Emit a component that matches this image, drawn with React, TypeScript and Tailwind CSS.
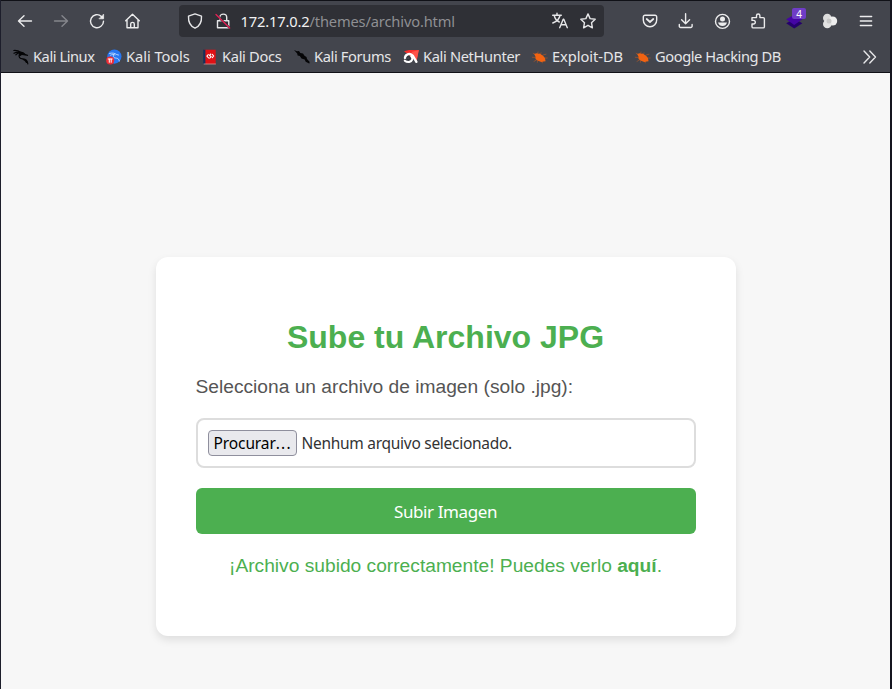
import type { ReactNode } from 'react';

const stroke = {
  fill: 'none',
  stroke: 'currentColor',
  strokeWidth: 1.4,
  strokeLinecap: 'round' as const,
  strokeLinejoin: 'round' as const,
};

function Glyph({ children }: { children: ReactNode }) {
  return (
    <svg width="16" height="16" viewBox="0 0 16 16" className="block shrink-0 overflow-visible" {...stroke}>
      {children}
    </svg>
  );
}

function ToolButton({ label, dim, children }: { label: string; dim?: boolean; children: ReactNode }) {
  return (
    <button aria-label={label} className={`flex h-8 w-9 shrink-0 items-center justify-center ${dim ? 'text-[#85868c]' : 'text-[#ececed]'}`}>
      {children}
    </button>
  );
}

const dragon = (
  <Glyph>
    <g stroke="#050507" strokeWidth="1.2">
      <path d="M.8 1.500c2.800-.2 4.900.3 6.800 1.700M1 4.300c2.300-1.300 4.500-1.300 6.800-.9M2.800 5.800C4 4.200 6 3.600 8 3.600M7.500 3.200c1.500.2 3.500 1 4.800 2.400l2.200.8M6.600 4.200C5 8.600 7 9.600 9.900 9.800c3.200.2 4.600 1.800 4.900 5M9.500 10c1.900.8 3.500 1.900 4 3.500" />
      <path d="M7.400 3.300 12.300 5.800 9 5.300 6.600 6.700z" fill="#050507" />
    </g>
  </Glyph>
);

const tools = (
  <Glyph>
    <circle cx="8.400" cy="7.600" r="7.100" fill="#2777f2" stroke="none" />
    <path d="M3.500 4.400c3-.7 5.200-.3 7.300 1.200l1.700.4M4.500 6.200c1.500-.8 3.200-.9 4.500-.3M7.600 5.500c-1 3 .8 3.400 2.900 3.700 1.900.3 2.600 1.300 2.800 2.800" stroke="#c1ddff" strokeWidth=".9" />
    <circle cx="4.200" cy="11.500" r="4" fill="#ee2d35" stroke="none" />
    <path d="M2.200 10h4M3.300 10.200v3.100M5.200 10.200v3.100" stroke="#fff" strokeWidth="1" />
  </Glyph>
);

const docs = (
  <Glyph>
    <path d="M2 .7h11.700v14.500H2z" fill="#df1015" stroke="none" />
    <path d="M1.200.7h2.200v14.500H1.200z" fill="#17305b" stroke="none" />
    <path d="M6.300 5.500 4.900 7.200l1.600 1.600M8.800 5 7.400 6.300l1.800 1.400-1.500 1.400M10.300 5.400 11.700 7l-1.400 1.600" stroke="#fff" strokeWidth="1.100" />
    <path d="M2 15h11.500" stroke="#c8b3af" strokeWidth=".7" />
  </Glyph>
);

const forums = (
  <Glyph>
    <path d="m0 1 3 1.300L5 2l1.300 2 2.700.5 1.500 2.300 2 1.200.5 2 3.200 3.500-1.200-.1.600 1.400-3.900-2-1-2.200-3.200-1-1.700-2.600L3.600 6.600 3.200 4.600z" fill="#050507" stroke="none" />
  </Glyph>
);

const nethunter = (
  <Glyph>
    <path d="M1 2.300 6 1h9.800L13.600 12z" fill="#f4302d" stroke="none" />
    <path d="m8.500 3 7.300-2L13.600 12z" fill="#ff5248" stroke="none" />
    <path d="M2 8.800C2.500 4.800 7.500 3.500 10 7l3.400 5.800" stroke="#fff" strokeWidth="2.400" />
    <path d="M8.300 7.500c2.200 1.800.8 5-2 5.400-1.700.2-3.300-.2-4.500-1.200" stroke="#fff" strokeWidth="2.100" />
    <path d="M3.600 8.700c1.400-1.800 3.200-1.300 3.500.4.200 1.200-.9 1.900-2.900 1.300" stroke="#272b30" strokeWidth=".8" />
  </Glyph>
);

const bug = (
  <Glyph>
    <path d="m1.200 4.300 3 1.600M.3 8.300l4 .2M2 12.400l3-1.800M6 3 5.500 5.500M9 3.800l-.7 2M11 6l3-.8M11.500 9.200l3.700-.2M6 11l-.6 2.300M10 12l.3 1.800" stroke="#9b542e" strokeWidth=".8" />
    <path d="m2.200 5 2.300-.8 2 .5 1-.2 2.500 1.400 1.300 1.200 1.600 1.900.7 3.300-2 .2-2.300.5-3.300-1.300-2.500-1.600L3.600 8z" fill="#f26312" stroke="none" />
  </Glyph>
);

function Bookmark({ icon, text, box, track }: { icon: ReactNode; text: string; box: string; track: string }) {
  return (
    <a className={`flex shrink-0 items-center gap-1 whitespace-nowrap ${box}`}>
      {icon}
      <span className={`-mt-px ${track}`}>{text}</span>
    </a>
  );
}

function BrowserChrome() {
  return (
    <header className="h-[73px] shrink-0 border-t border-b border-[#101117] bg-[#43454d] font-['Noto_Sans',sans-serif] text-[14.67px] text-[#e6e6e8]">
      <div className="flex h-10 items-center pl-1.5">
        <ToolButton label="Back">
          <Glyph><path d="M14.500 8H1.700M7 2.700 1.500 8 7 13.300" /></Glyph>
        </ToolButton>
        <ToolButton label="Forward" dim>
          <Glyph><path d="M1.500 8h12.800M9 2.700 14.500 8 9 13.300" /></Glyph>
        </ToolButton>
        <ToolButton label="Reload">
          <Glyph>
            <path d="M14.500 8.200A6.500 6.500 0 1 1 12.400 3.400l1.300 1.300" />
            <path d="M14.600 1.500v4.300h-4.300z" fill="currentColor" strokeWidth=".7" />
          </Glyph>
        </ToolButton>
        <ToolButton label="Home">
          <Glyph><path d="M.7 7.800 7.500 1.200l6.800 6.600M2 7v7.800h11V7M5.700 14.600V11c0-2.200 3.600-2.200 3.600 0v3.600" /></Glyph>
        </ToolButton>
        <div className="ml-7 flex h-8 w-[425px] shrink-0 items-center rounded bg-[#2f3036] pr-2 pl-2">
          <Glyph><path d="M8 .9 14.500 3.200C14.800 8.800 12.500 13.200 8 15.200 3.500 13.200 1.200 8.800 1.500 3.200z" /></Glyph>
          <div className="ml-3">
            <Glyph>
              <path d="M4.800 7V4.300c0-4.200 6.900-4.200 6.900 0V7M2.500 7.700h11.300v7H2.500z" />
              <path d="M1 1.500 14.700 15" stroke="#2f3036" strokeWidth="2.200" />
              <path d="M1 1.500 14.700 15" stroke="#e52055" strokeWidth="1.300" />
            </Glyph>
          </div>
          <div className="ml-[9.500px] flex-1 tracking-[-0.15px] whitespace-nowrap text-[#8e8f93]">
            <span className="text-[#f1f1f2]">172.17.0.2</span>/themes/archivo.html
          </div>
          <Glyph>
            <path d="M.7 2.300h8.600M5 .3v2M2.200 2.500C3 6 5.200 8 7.300 9M8 2.500C7.300 6 4.500 8.600.8 10M7.700 14.700l3.500-8.400h.6l3.500 8.400M9 11.800h5" />
          </Glyph>
          <div className="ml-3">
            <Glyph><path d="m8 .9 2.100 4.700 5.100.6-3.700 3.500.9 5.100L8 12.300l-4.400 2.500.9-5.100L.8 6.200l5.100-.6z" /></Glyph>
          </div>
        </div>
        <div className="ml-7 flex">
          <ToolButton label="Pocket">
            <Glyph>
              <path d="M3 2.200h10a1.700 1.700 0 0 1 1.700 1.700V7a6.700 6.700 0 0 1-13.400 0V3.900A1.700 1.700 0 0 1 3 2.200z" />
              <path d="m4.700 6 3.300 3 3.300-3" strokeWidth="1.700" />
            </Glyph>
          </ToolButton>
          <ToolButton label="Downloads">
            <Glyph><path d="M7.600.7v10M3.600 6.700l4 4.100 4-4.100M1.300 11.500v1.700a1.300 1.300 0 0 0 1.300 1.300h10.200a1.300 1.300 0 0 0 1.300-1.300v-1.700" /></Glyph>
          </ToolButton>
          <ToolButton label="Account">
            <Glyph>
              <circle cx="8.500" cy="8.400" r="7" />
              <circle cx="8.500" cy="6" r="2.500" fill="currentColor" stroke="none" />
              <path d="M4 9.500h9c-.7 2.500-2.300 3.500-4.500 3.500S4.700 12 4 9.500z" fill="currentColor" stroke="none" />
            </Glyph>
          </ToolButton>
          <ToolButton label="Extensions">
            <Glyph>
              <path d="M2 7V4.600h4.500V2.700a1.700 1.700 0 0 1 3.400 0v1.900h3.300c.8 0 1.200.4 1.200 1.200v7.900c0 .8-.4 1.200-1.200 1.200H3.300c-.8 0-1.300-.4-1.300-1.200V11h1.500a1.800 1.800 0 0 0 0-3.600H2z" />
            </Glyph>
          </ToolButton>
          <ToolButton label="Proxy patterns">
            <span className="relative block size-4">
              <svg width="18" height="16" viewBox="0 0 18 16" className="block overflow-visible">
                <path d="m.2 10.200 8-4.500 8.200 4.500-8.200 5.300z" fill="#25006d" />
                <path d="m.2 6.200 8-4.500 8.200 4.500L8.200 12z" fill="#4505a4" />
              </svg>
              <span className="absolute -top-[5px] left-1.5 flex h-[11px] w-3.5 items-center justify-center rounded-[2px] bg-[#6f3dc6] text-[10px] leading-none text-white">4</span>
            </span>
          </ToolButton>
          <ToolButton label="Containers">
            <Glyph>
              <g stroke="none">
                <circle cx="5.300" cy="5" r="4.300" fill="#dcdcdc" />
                <circle cx="10.700" cy="8" r="4.500" fill="#eeeeee" />
                <circle cx="5.300" cy="11" r="4.300" fill="#e2e2e2" />
                <circle cx="7" cy="8" r="2.500" fill="#c8c8c8" />
              </g>
            </Glyph>
          </ToolButton>
          <ToolButton label="Menu">
            <Glyph><path d="M2.300 3.500h11.400M2.300 8h11.400M2.300 12.500h11.400" strokeWidth="1.300" /></Glyph>
          </ToolButton>
        </div>
      </div>
      <nav className="flex h-[31px] items-center pl-3">
        <Bookmark icon={dragon} text="Kali Linux" box="w-[93px]" track="tracking-[-0.45px]" />
        <Bookmark icon={tools} text="Kali Tools" box="w-[96px]" track="tracking-[-0.05px]" />
        <Bookmark icon={docs} text="Kali Docs" box="w-[92px]" track="tracking-[-0.33px]" />
        <Bookmark icon={forums} text="Kali Forums" box="w-[109px]" track="tracking-[-0.37px]" />
        <Bookmark icon={nethunter} text="Kali NetHunter" box="w-[129px]" track="tracking-[-0.35px]" />
        <Bookmark icon={bug} text="Exploit-DB" box="w-[103px]" track="tracking-[-0.05px]" />
        <Bookmark icon={bug} text="Google Hacking DB" box="w-[226px]" track="tracking-[-0.42px]" />
        <Glyph><path d="m3 2 5.700 6L3 14M8.800 2l5.700 6-5.700 6" /></Glyph>
      </nav>
    </header>
  );
}

export default function App() {
  return (
    <div className="flex h-[689px] w-[892px] flex-col overflow-hidden border-r-2 border-l border-r-[#15151f] border-l-[#1d1e2b] bg-[#f7f7f7]">
      <BrowserChrome />
      <main className="flex flex-1 justify-center pt-[184px] font-['Liberation_Sans',Arial,sans-serif]">
        <form className="h-[379px] w-[580px] rounded-xl bg-white px-10 pt-[61px] shadow-[0_4px_8px_rgba(0,0,0,0.1)]">
          <h1 className="text-center text-[32px] leading-[38px] font-bold text-[#4caf50]">Sube tu Archivo JPG</h1>
          <label className="mt-5 block text-[19.2px] leading-[22px] text-[#555]">Selecciona un archivo de imagen (solo .jpg):</label>
          <div className="mt-5 flex h-[50px] items-center rounded-lg border-2 border-[#ddd] px-2.5 font-['Noto_Sans',sans-serif] text-[15.500px] whitespace-nowrap text-[#333]">
            <button type="button" className="flex h-[26px] w-[89px] items-center rounded-[4px] border border-[#8f8f9d] bg-[#e9e9ed] pt-0.5 pl-[5px] text-black">
              <span className="tracking-[-0.1px]">Procurar</span>
              <span className="tracking-[1.2px]">...</span>
            </button>
            <span className="mt-px ml-[5px] tracking-[-0.28px]">Nenhum arquivo selecionado.</span>
          </div>
          <button type="button" className="mt-5 block h-[46px] w-full rounded-md bg-[#4caf50] pt-px font-['Noto_Sans',sans-serif] text-[17px] tracking-[-0.4px] text-white">Subir Imagen</button>
          <p className="mt-[21px] text-center text-[19.2px] leading-[22px] text-[#4caf50]">
            ¡Archivo subido correctamente! Puedes verlo <a className="font-bold">aquí</a>.
          </p>
        </form>
      </main>
    </div>
  );
}
